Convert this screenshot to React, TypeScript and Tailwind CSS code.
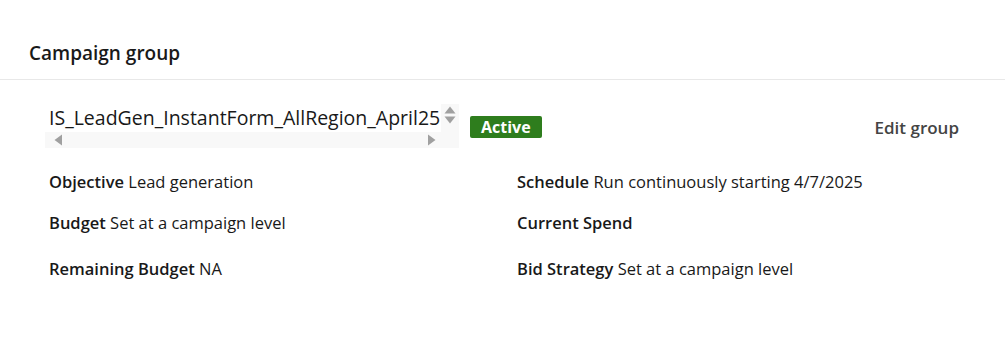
import React from "react";

const font = { fontFamily: '"Open Sans", "Noto Sans", sans-serif' };

function Row({ label, value }: { label: string; value?: string }) {
  return (
    <div className="text-[16.5px] leading-[20px] text-[#191919]">
      <span className="font-semibold">{label}</span>
      {value ? <span> {value}</span> : null}
    </div>
  );
}

export default function App() {
  return (
    <div className="w-[1005px] h-[337px] bg-white" style={font}>
      <div className="pt-[42px] pb-[15px] px-[29px] border-b border-[#e8e8e8]">
        <h2 className="text-[19px] leading-[22px] font-semibold text-[#191919]">Campaign group</h2>
      </div>
      <div className="pl-[45px] pr-[46px] pt-[24px]">
        <div className="flex items-start">
          <div className="flex w-[414px] h-[44px] bg-[#f8f8f8]">
            <div className="flex flex-col w-[396px]">
              <div className="h-[28px] bg-white pl-[4px] pt-[3px] text-[19.5px] leading-[22px] text-[#191919] whitespace-nowrap overflow-hidden">
                IS_LeadGen_InstantForm_AllRegion_April25
              </div>
              <div className="h-[16px] flex items-center justify-between pl-[9px] pr-[5px]">
                <svg width="9" height="12" viewBox="0 0 9 12"><path d="M8 0.5 L8 11.5 L0.5 6 Z" fill="#a0a0a0" /></svg>
                <svg width="9" height="12" viewBox="0 0 9 12"><path d="M1 0.5 L1 11.5 L8.5 6 Z" fill="#a0a0a0" /></svg>
              </div>
            </div>
            <div className="w-[18px] flex flex-col items-center pt-[2px] gap-[2px]">
              <svg width="12" height="8" viewBox="0 0 12 8"><path d="M6 0.5 L11.5 7.5 L0.5 7.5 Z" fill="#a0a0a0" /></svg>
              <svg width="12" height="8" viewBox="0 0 12 8"><path d="M0.5 0.5 L11.5 0.5 L6 7.5 Z" fill="#a0a0a0" /></svg>
            </div>
          </div>
          <div className="ml-[11px] mt-[12px] h-[22px] px-[11px] rounded-[2px] bg-[#2e7d1d] text-white text-[16px] leading-[22px] font-bold">
            Active
          </div>
          <div className="ml-auto mt-[14px] text-[17px] leading-[20px] font-semibold text-[#444444]">Edit group</div>
        </div>
        <div className="grid grid-cols-[468px_1fr] pl-[4px] mt-[24px] gap-y-[21px]">
          <Row label="Objective" value="Lead generation" />
          <Row label="Schedule" value="Run continuously starting 4/7/2025" />
          <Row label="Budget" value="Set at a campaign level" />
          <Row label="Current Spend" />
        </div>
        <div className="grid grid-cols-[468px_1fr] pl-[4px] mt-[26px]">
          <Row label="Remaining Budget" value="NA" />
          <Row label="Bid Strategy" value="Set at a campaign level" />
        </div>
      </div>
    </div>
  );
}
